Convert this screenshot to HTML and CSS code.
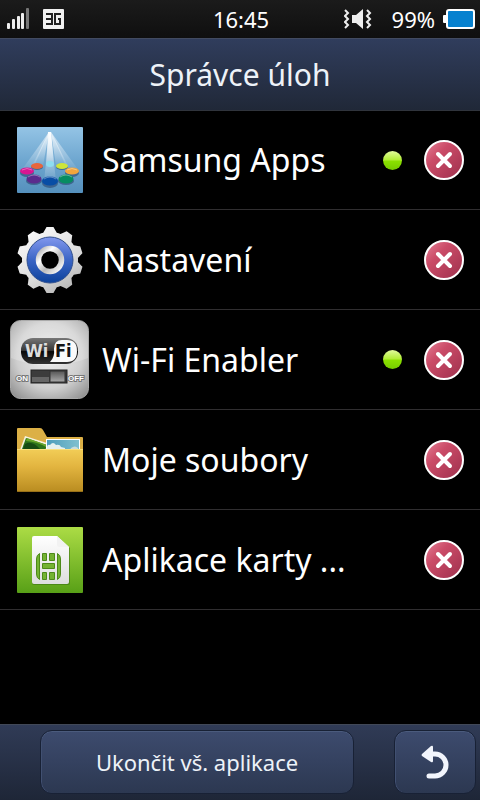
FILE: index.html
```html
<!DOCTYPE html>
<html lang="cs">
<head>
<meta charset="utf-8">
<meta name="viewport" content="width=device-width, initial-scale=1">
<title>Správce úloh</title>
<link rel="stylesheet" href="styles.css">
</head>
<body>
<svg class="defs" aria-hidden="true">
  <defs>
    <linearGradient id="red" x1="0" y1="0" x2="1" y2="1"><stop offset="0" stop-color="#e78398"/><stop offset=".35" stop-color="#cb4c68"/><stop offset="1" stop-color="#9c2f4c"/></linearGradient>
    <symbol id="close" viewBox="0 0 40 40">
      <circle cx="20" cy="20" r="19" fill="url(#red)" stroke="#fff" stroke-width="2"/>
      <path d="M14 14L26 26M26 14L14 26" stroke="#fff" stroke-width="4" stroke-linecap="round"/>
    </symbol>
  </defs>
</svg>
<div class="screen">
  <div class="status">
    <div class="status-side">
      <svg width="22" height="22" viewBox="0 0 22 22" aria-label="Signál">
        <g fill="#eee"><rect y="15" width="3" height="6" rx="1"/><rect x="5" y="11" width="3" height="10" rx="1"/><rect x="10" y="8" width="3" height="13" rx="1"/><rect x="14" y="5" width="3" height="16" rx="1"/></g>
        <rect x="19" width="3" height="21" rx="1" fill="#777"/>
      </svg>
      <svg width="21" height="20" viewBox="0 0 21 20" aria-label="3G">
        <rect width="21" height="20" rx="1" fill="#f1f1f1"/>
        <path d="M3 5H9V15H3M3 10H9M18 5H12V15H17V10H15" fill="none" stroke="#222" stroke-width="2"/>
      </svg>
    </div>
    <time class="clock">16:45</time>
    <div class="status-side status-right">
      <svg width="28" height="20" viewBox="0 0 28 20" aria-label="Vibrace">
        <path d="M8 6H12L19 0V20L12 14H8Z" fill="#eee"/>
        <path d="M1 1L4 4L1 7L4 10L1 13L4 16L1 19M23 1L26 4L23 7L26 10L23 13L26 16L23 19" fill="none" stroke="#eee" stroke-width="2"/>
      </svg>
      <span class="percent">99%</span>
      <svg width="32" height="20" viewBox="0 0 32 20" aria-label="Baterie">
        <rect y="6" width="5" height="8" rx="1" fill="#fff"/>
        <rect x="4" y="1" width="27" height="18" rx="2" fill="#0781cf" stroke="#fff" stroke-width="2"/>
      </svg>
    </div>
  </div>
  <header class="title"><h1>Správce úloh</h1></header>
  <main>
    <ul class="tasks">
      <li class="task">
        <svg class="icon" viewBox="0 0 80 80" aria-hidden="true">
          <defs>
            <linearGradient id="sky" x2="0" y2="1"><stop offset="0" stop-color="#94c4e5"/><stop offset=".5" stop-color="#6fa7d0"/><stop offset="1" stop-color="#5590bd"/></linearGradient>
            <linearGradient id="beam" x2="0" y2="1"><stop offset="0" stop-color="#fff"/><stop offset="1" stop-color="#fff" stop-opacity=".05"/></linearGradient>
          </defs>
          <rect x="7" y="7" width="66" height="66" rx="1" fill="url(#sky)"/>
          <g fill="url(#beam)">
            <path d="M39 12L11 51H22Z" opacity=".6"/><path d="M39 12L22 46H33Z" opacity=".85"/>
            <path d="M39 12L34 62H46L41 12Z" opacity=".8"/><path d="M38 12L36 45H44L41 12Z"/>
            <path d="M41 12L46 46H58Z" opacity=".85"/><path d="M41 12L58 51H69Z" opacity=".6"/>
          </g>
          <ellipse cx="40" cy="44" rx="4" ry="3" fill="#8eddf0"/>
          <g fill="#263d66" opacity=".55"><ellipse cx="27" cy="47" rx="6" ry="3"/><ellipse cx="52" cy="47" rx="6" ry="3"/><ellipse cx="17" cy="53" rx="7" ry="4"/><ellipse cx="62" cy="53" rx="7" ry="4"/><ellipse cx="24" cy="61" rx="8" ry="4"/><ellipse cx="56" cy="61" rx="8" ry="4"/><ellipse cx="40" cy="63" rx="8" ry="5"/></g>
          <ellipse cx="27" cy="46" rx="6" ry="3" fill="#e8653b"/><ellipse cx="52" cy="46" rx="6" ry="3" fill="#cde53b"/>
          <ellipse cx="17" cy="51" rx="7" ry="3.5" fill="#d91591"/><ellipse cx="62" cy="51" rx="7" ry="3.5" fill="#f2a53c"/>
          <ellipse cx="24" cy="59" rx="7.5" ry="4.5" fill="#5b2b8d"/><ellipse cx="56" cy="59" rx="7.5" ry="4.5" fill="#078c62"/>
          <ellipse cx="40" cy="61" rx="8" ry="4.5" fill="#084da5"/>
          <g fill="none" stroke="#fff" opacity=".35"><path d="M12 50Q17 47 22 50M18 57Q24 53 30 57M34 59Q40 55 46 59M50 57Q56 53 62 57M57 50Q62 47 67 50"/></g>
        </svg>
        <span class="name">Samsung Apps</span>
        <span class="running" role="img" aria-label="Spuštěno"></span>
        <button class="kill" aria-label="Ukončit Samsung Apps"><svg width="40" height="40"><use href="#close"/></svg></button>
      </li>
      <li class="task">
        <svg class="icon" viewBox="0 0 80 80" aria-hidden="true">
          <defs>
            <linearGradient id="metal" gradientUnits="userSpaceOnUse" x1="20" y1="7" x2="60" y2="73"><stop offset="0" stop-color="#fafafa"/><stop offset=".6" stop-color="#dcdcdc"/><stop offset="1" stop-color="#b4b4b4"/></linearGradient>
            <linearGradient id="blue" x2="0" y2="1"><stop offset="0" stop-color="#8298ee"/><stop offset=".5" stop-color="#3b65c5"/><stop offset="1" stop-color="#0c429c"/></linearGradient>
            <linearGradient id="ring" x1="0" y1="0" x2="1" y2="1"><stop offset="0" stop-color="#aaa"/><stop offset=".3" stop-color="#fff"/><stop offset=".6" stop-color="#bbb"/><stop offset="1" stop-color="#fff"/></linearGradient>
            <clipPath id="gear"><circle cx="40" cy="40" r="28"/>
              <path id="t" d="M32 15L36 8Q36 7 37 7H43Q44 7 44 8L48 15Z"/>
              <use href="#t" transform="rotate(36 40 40)"/><use href="#t" transform="rotate(72 40 40)"/><use href="#t" transform="rotate(108 40 40)"/><use href="#t" transform="rotate(144 40 40)"/><use href="#t" transform="rotate(180 40 40)"/><use href="#t" transform="rotate(216 40 40)"/><use href="#t" transform="rotate(252 40 40)"/><use href="#t" transform="rotate(288 40 40)"/><use href="#t" transform="rotate(324 40 40)"/>
            </clipPath>
          </defs>
          <rect width="80" height="80" fill="url(#metal)" clip-path="url(#gear)"/>
          <circle cx="40" cy="40" r="23" fill="url(#blue)" stroke="#31508e"/>
          <circle cx="40" cy="40" r="11.5" fill="#000" stroke="url(#ring)" stroke-width="5.5"/>
        </svg>
        <span class="name">Nastavení</span>
        <button class="kill" aria-label="Ukončit Nastavení"><svg width="40" height="40"><use href="#close"/></svg></button>
      </li>
      <li class="task">
        <svg class="icon" viewBox="0 0 80 80" aria-hidden="true">
          <defs>
            <radialGradient id="silver" cy=".45" r=".7"><stop offset="0" stop-color="#efefef"/><stop offset=".6" stop-color="#cfcfcf"/><stop offset="1" stop-color="#8f8f8f"/></radialGradient>
            <linearGradient id="dark" x2="0" y2="1"><stop offset="0" stop-color="#777"/><stop offset=".5" stop-color="#333"/><stop offset=".52" stop-color="#080808"/><stop offset="1" stop-color="#333"/></linearGradient>
            <linearGradient id="knob" x2="0" y2="1"><stop offset="0" stop-color="#555"/><stop offset="1" stop-color="#aaa"/></linearGradient>
          </defs>
          <rect x=".5" y=".5" width="78" height="78" rx="10" fill="url(#silver)" stroke="#aaa"/>
          <path d="M1 38Q40 53 78 38V12Q78 1 68 1H11Q1 1 1 12Z" fill="#fff" opacity=".22"/>
          <rect x="11" y="18" width="57" height="26" rx="12" fill="url(#dark)"/>
          <path d="M40 42Q45 37 44 29Q44 20 52 20H57Q67 20 67 31T57 42Z" fill="#fafafa"/>
          <text class="wifi" x="15" y="37" fill="#ddd">Wi</text>
          <text class="wifi" x="45" y="37" fill="#151515">Fi</text>
          <rect x="21" y="50" width="36" height="13" fill="#3c3c3c" stroke="#222"/>
          <path d="M22 57H39V62H22Z" fill="#666"/>
          <rect x="40" y="51" width="15" height="11" fill="url(#knob)" stroke="#333"/>
          <g class="switch-text"><text x="6" y="61">ON</text><text x="58" y="61">OFF</text></g>
        </svg>
        <span class="name">Wi-Fi Enabler</span>
        <span class="running" role="img" aria-label="Spuštěno"></span>
        <button class="kill" aria-label="Ukončit Wi-Fi Enabler"><svg width="40" height="40"><use href="#close"/></svg></button>
      </li>
      <li class="task">
        <svg class="icon" viewBox="0 0 80 80" aria-hidden="true">
          <defs>
            <linearGradient id="gold" x2="0" y2="1"><stop offset="0" stop-color="#f2cd57"/><stop offset=".4" stop-color="#e3b540"/><stop offset="1" stop-color="#b98c20"/></linearGradient>
            <linearGradient id="photo" x2="1" y2="0"><stop offset="0" stop-color="#4d9dbb"/><stop offset="1" stop-color="#7fc0cf"/></linearGradient>
          </defs>
          <path d="M7 9Q7 8 8 8H30Q32 8 33 10L37 17H72Q73 17 73 18V35H7Z" fill="#dcb046"/>
          <path d="M15 16L40 24L36 35L10 30Z" fill="#f7f2df"/>
          <path d="M16 18L37 25L34 34L12 29Z" fill="#2d731b"/>
          <path d="M17 18L37 25L36 27Q28 22 16 21Z" fill="#68a62b"/><path d="M15 24Q22 20 30 29H13Z" fill="#174b13"/>
          <path d="M36 19H70V31H36Z" fill="#fff"/><path d="M37 20H69V30H37Z" fill="url(#photo)"/>
          <path d="M37 28Q37 24 40 25Q43 21 46 25Q50 24 51 27L55 28V30H37Z" fill="#e5f0ee"/><path d="M61 28Q65 25 68 28V30H60Z" fill="#c9dcda"/>
          <rect x="7" y="29" width="66" height="43" rx="1" fill="url(#gold)"/><path d="M7 29.5H73" stroke="#fae07e"/><path d="M8 71.5H72" stroke="#987018"/>
        </svg>
        <span class="name">Moje soubory</span>
        <button class="kill" aria-label="Ukončit Moje soubory"><svg width="40" height="40"><use href="#close"/></svg></button>
      </li>
      <li class="task">
        <svg class="icon" viewBox="0 0 80 80" aria-hidden="true">
          <defs>
            <linearGradient id="green" x2="0" y2="1"><stop offset="0" stop-color="#acdc45"/><stop offset="1" stop-color="#58a017"/></linearGradient>
            <linearGradient id="card" x2="0" y2="1"><stop offset="0" stop-color="#fff"/><stop offset="1" stop-color="#dedede"/></linearGradient>
          </defs>
          <rect x="7" y="7" width="66" height="66" rx="1" fill="url(#green)"/>
          <path d="M24 17H47L60 28V63Q60 65 58 65H24Q22 65 22 63V19Q22 17 24 17Z" fill="#3e7414" opacity=".6"/>
          <path d="M24 16H47L59 27V62Q59 64 57 64H24Q22 64 22 62V18Q22 16 24 16Z" fill="url(#card)"/>
          <path d="M47 16V25Q47 27 49 27H59Z" fill="#f2f2f2"/>
          <g fill="#74b332" stroke="#4d8919" stroke-width="1">
            <path d="M29.500 33.500V59.500Q26.500 58 26.500 54V39Q26.500 35 29.500 33.500ZM47.500 33.500V59.500Q50.500 58 50.500 54V39Q50.500 35 47.500 33.500Z"/>
            <path d="M32.500 33.500H36.500V40.500H32.500ZM39.500 33.500H44.500V40.500H39.500ZM32.500 43.500H44.500V48.500H32.500ZM32.500 52.500H36.500V59.500H32.500ZM39.500 52.500H44.500V59.500H39.500Z"/>
          </g>
        </svg>
        <span class="name">Aplikace karty ...</span>
        <button class="kill" aria-label="Ukončit Aplikace karty"><svg width="40" height="40"><use href="#close"/></svg></button>
      </li>
    </ul>
  </main>
  <footer class="bar">
    <button class="key key-all">Ukončit vš. aplikace</button>
    <button class="key key-back" aria-label="Zpět">
      <svg width="28" height="34" viewBox="0 0 28 34" aria-hidden="true"><path d="M1 9L10 1Q12 0 12 2V16Q12 18 10 17L1 11Q0 10 1 9Z" fill="#f2f5fc"/><path d="M11 9H14A11 11 0 0 1 14 31H8" fill="none" stroke="#f2f5fc" stroke-width="5" stroke-linecap="round"/></svg>
    </button>
  </footer>
</div>
</body>
</html>
```
FILE: styles.css
```css
* { box-sizing: border-box; }
body {
  margin: 0;
  background: #000;
  color: #fff;
  font-family: "Noto Sans", "Open Sans", sans-serif;
}
.defs { position: absolute; width: 0; height: 0; }
.screen { display: flex; flex-direction: column; min-height: 100vh; }
.status {
  display: grid;
  grid-template-columns: 1fr auto 1fr;
  align-items: center;
  height: 38px;
  padding: 0 5px 0 7px;
  background: linear-gradient(#1b1b1b, #0f0f0f);
}
.status-side { display: flex; align-items: center; gap: 14px; }
.status-right { justify-content: flex-end; gap: 8px; }
.clock { font-size: 22px; line-height: 38px; }
.percent { margin-left: 12px; font-size: 22px; line-height: 38px; }
.title {
  height: 73px;
  border-top: 1px solid #424b61;
  border-bottom: 1px solid #30343c;
  background: linear-gradient(#303d5c, #202838);
  text-align: center;
}
h1 { margin: 0; color: #edf2f8; font-size: 30px; font-weight: 400; line-height: 71px; }
main { flex: 1; }
.tasks { margin: 0; padding: 0; list-style: none; }
.task {
  display: flex;
  align-items: center;
  height: 100px;
  padding: 0 16px 0 10px;
  border-bottom: 1px solid #302e30;
}
.task:first-child { height: 99px; }
.icon { flex: none; width: 80px; height: 80px; }
.name {
  flex: 1;
  min-width: 0;
  margin-left: 12px;
  overflow: hidden;
  font-size: 32px;
  line-height: 48px;
  white-space: nowrap;
}
.running {
  width: 19px;
  height: 19px;
  margin-right: 22px;
  border-radius: 50%;
  background: linear-gradient(#e2fa9c, #b4ee3a 45%, #8ae000 55%, #76cb00);
}
.kill { width: 40px; height: 40px; padding: 0; border: 0; background: none; }
.kill svg, .key svg { display: block; }
.wifi { font: bold 18px "DejaVu Sans Condensed", "DejaVu Sans", sans-serif; }
.switch-text { fill: #fff; stroke: #777; stroke-width: 2px; paint-order: stroke; font: bold 8px "Liberation Sans", sans-serif; }
.bar {
  display: flex;
  gap: 40px;
  height: 76px;
  padding: 5px 4px 6px 40px;
  border-top: 1px solid #414857;
  background: linear-gradient(#303b56, #1e2637);
}
.key {
  display: flex;
  align-items: center;
  justify-content: center;
  padding: 0;
  border: 1px solid #182135;
  border-radius: 12px;
  background: linear-gradient(#3d4b6e, #2c3851);
  box-shadow: inset 0 1px #4b5b7d, inset 1px 0 #415071;
  color: #edf2f8;
  font: 22px "Noto Sans", sans-serif;
}
.key-all { flex: 1; }
.key-back { width: 82px; }
```
